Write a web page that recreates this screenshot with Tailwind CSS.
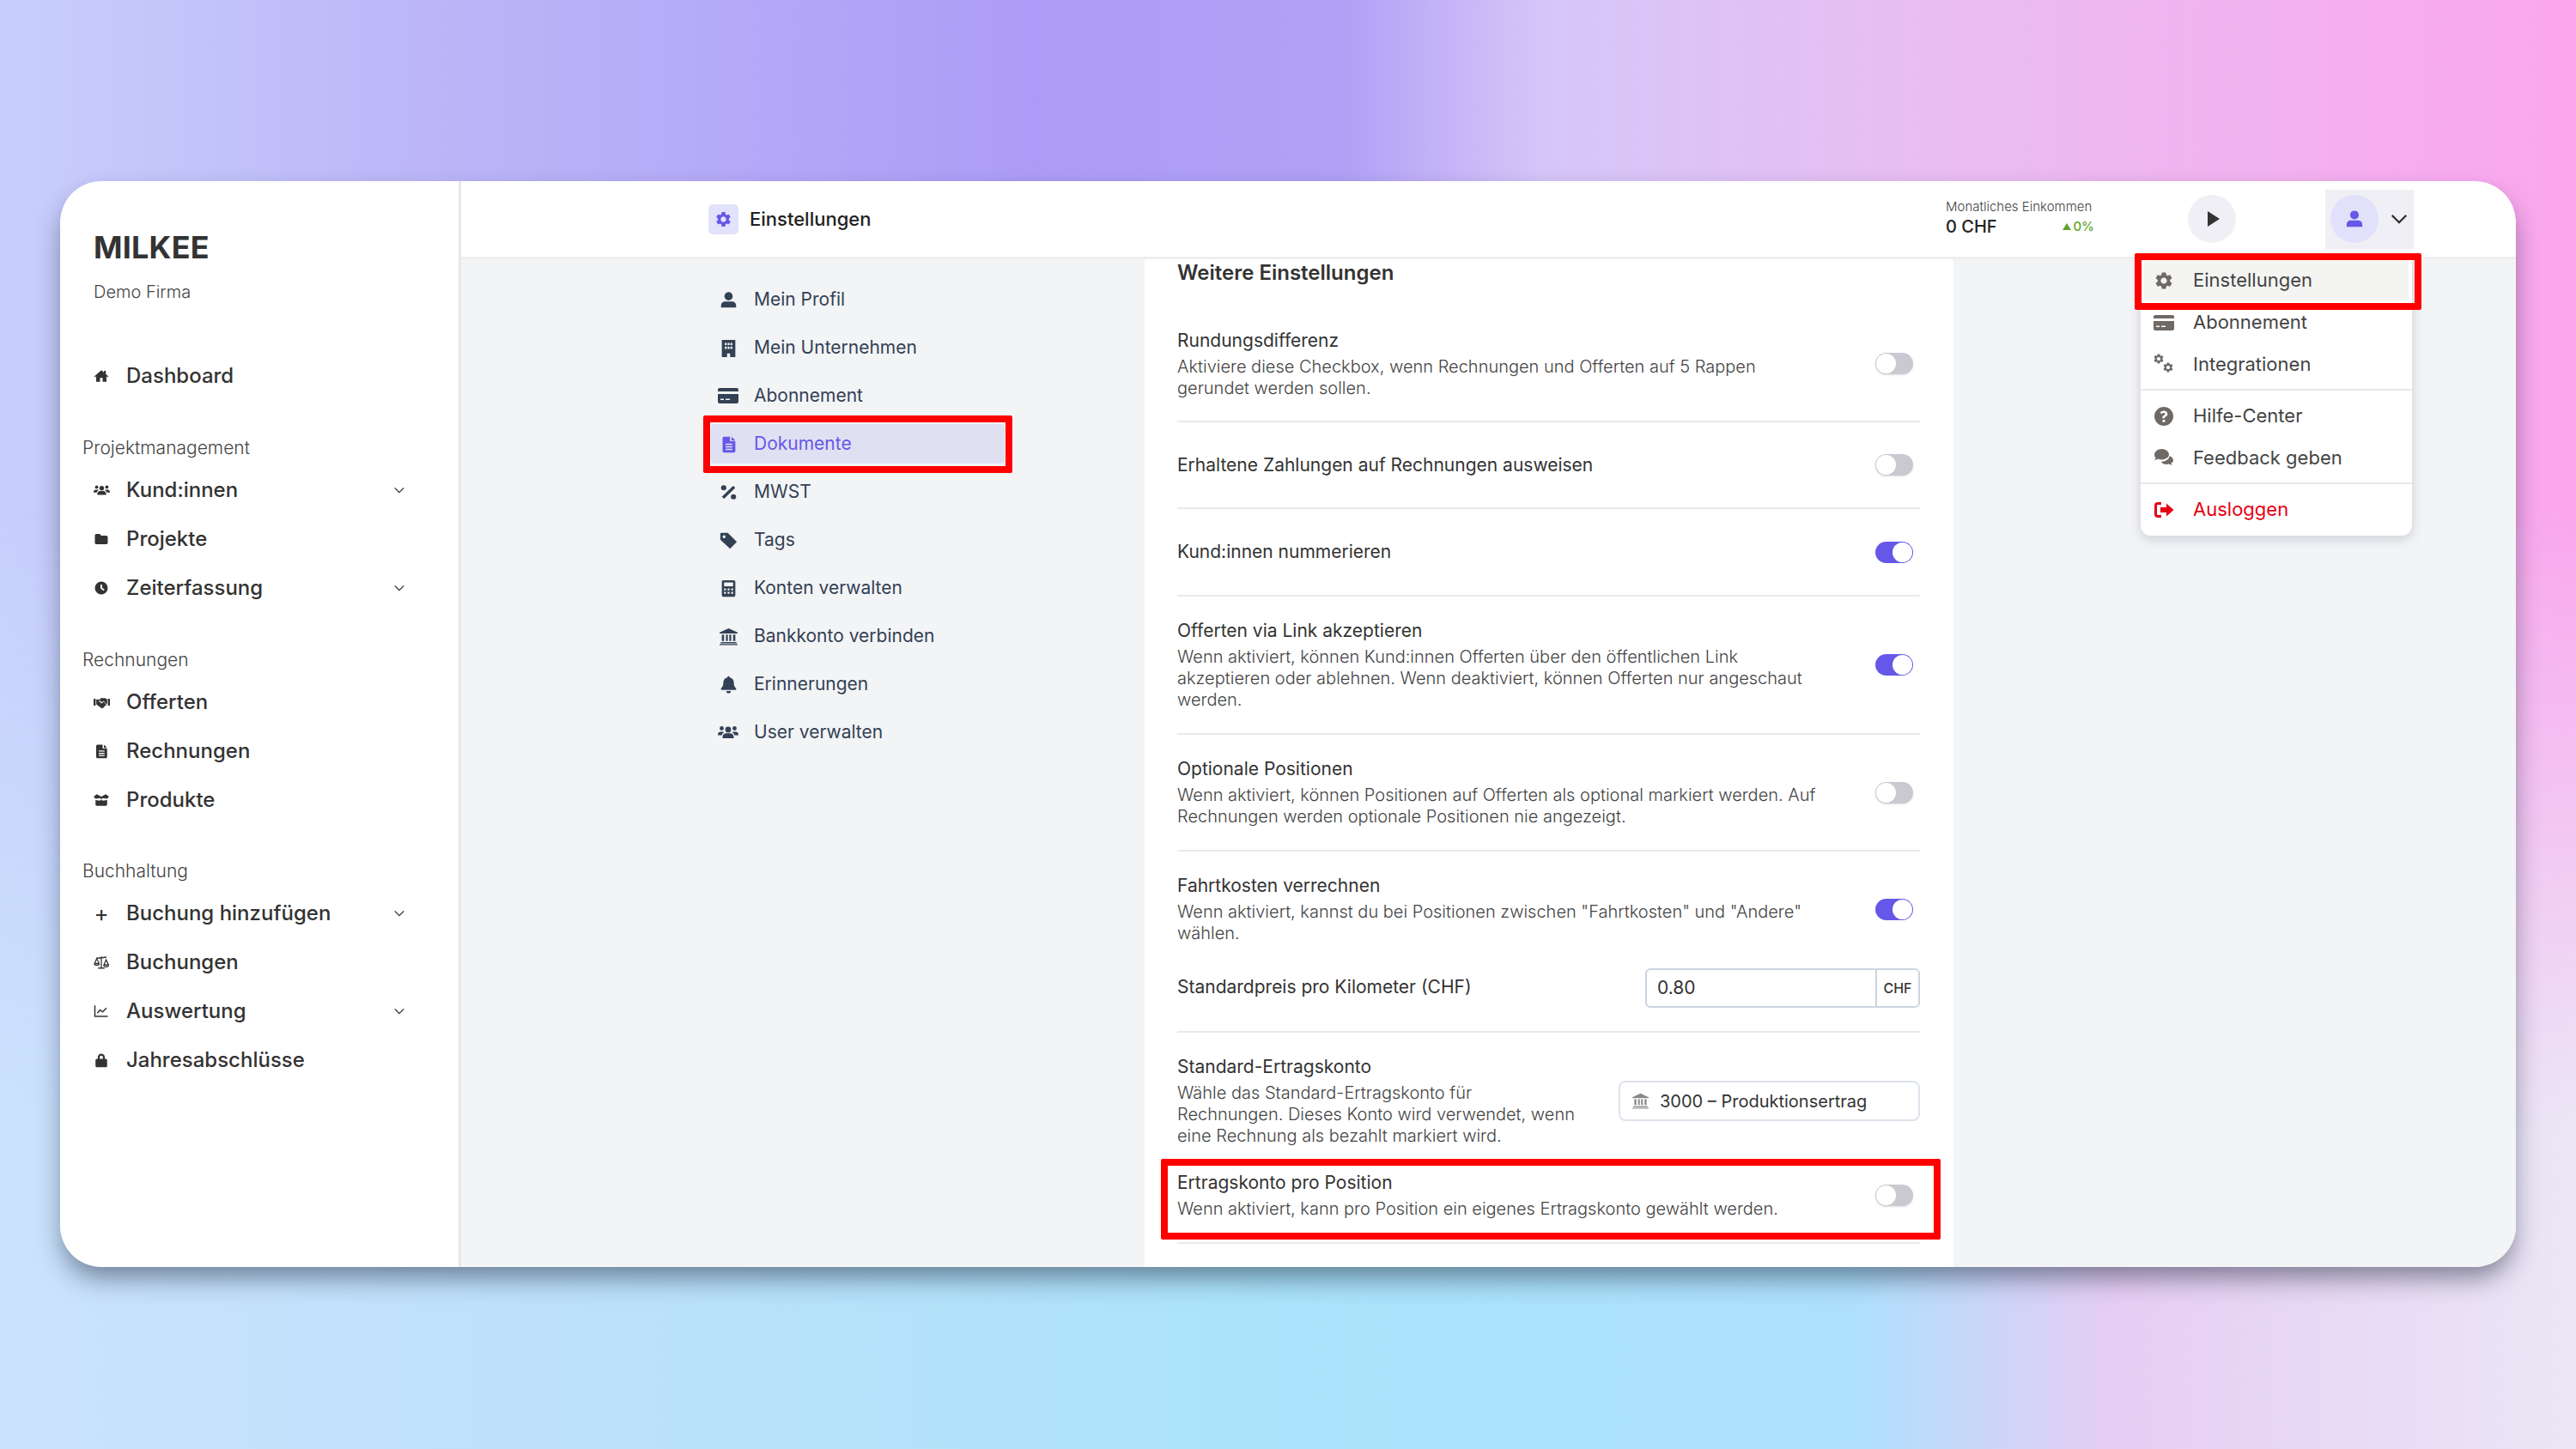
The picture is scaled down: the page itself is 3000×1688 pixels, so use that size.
<!DOCTYPE html>
<html lang="de">
<head>
<meta charset="UTF-8">
<title>Milkee Einstellungen</title>
<script src="https://cdn.jsdelivr.net/npm/@tailwindcss/browser@4"></script>
</head>
<body class="w-[3000px] h-[1688px] overflow-hidden font-['Inter',sans-serif] bg-[linear-gradient(90deg,#c8cffc_0%,#bdb8f8_15%,#ad9cf7_40%,#b0a0f6_52%,#d6c6f8_60%,#e9bdf3_75%,#f4b0f0_90%,#fba6ee_100%)] pl-[70px] pt-[211px]">

<!-- bottom half of the wallpaper -->
<div class="absolute inset-0 bg-[linear-gradient(90deg,#cbe2fd_0%,#bbe1fb_25%,#aae3fb_50%,#aee0fd_72%,#e6cdf4_82%,#ebe7f6_100%)] [mask-image:linear-gradient(180deg,transparent_35%,black_78%)]"></div>

<svg class="hidden">
  <symbol id="i-home" viewBox="0 0 24 24"><path d="M12 3 1 12.5l1.2 1.4L4 12.4V21h6v-6h4v6h6v-8.6l1.8 1.5 1.2-1.4L19 9V4h-3v2.4z"/></symbol>
  <symbol id="i-users" viewBox="0 4 24 16"><circle cx="12" cy="9" r="3.4"/><circle cx="4.5" cy="7.5" r="2.4"/><circle cx="19.500" cy="7.500" r="2.400"/><path d="M5.500 19v-1.500c0-2.500 2-4.200 4-4.200h5c2 0 4 1.700 4 4.200V19zM0 15c0-2.500 1.500-3.500 3-3.500h3c.6 0 1 .2 1.400.5-1.400.8-2.500 2-2.800 3.500H0zM24 15c0-2.500-1.500-3.500-3-3.500h-3c-.6 0-1 .2-1.400.5 1.400.8 2.500 2 2.800 3.500H24z"/></symbol>
  <symbol id="i-folder" viewBox="0 0 24 24"><path d="M2 6.500C2 5 3 4 4.500 4h5L12 6.500h7.500C21 6.500 22 7.500 22 9v8.500c0 1.500-1 2.500-2.500 2.500h-15C3 20 2 19 2 17.500z"/></symbol>
  <symbol id="i-clock" viewBox="0 0 24 24"><path fill-rule="evenodd" d="M12 2a10 10 0 1 0 0 20 10 10 0 0 0 0-20zm-1.300 4.500h2.600v5l3.700 2.700-1.500 2.100-4.800-3.500z"/></symbol>
  <symbol id="i-handshake" viewBox="0 3 24 18"><path d="M0 7h3v10H0zM21 7h3v10h-3z"/><path d="M4 8h5l-1 3 4 3 3-3 4 5-3 2-1 2-3 1-8-6H4zM10 6h7l3 2v6l-1 1-4-5-3 2-3-2z"/></symbol>
  <symbol id="i-file" viewBox="0 0 24 24"><path fill-rule="evenodd" d="M4 4a2 2 0 0 1 2-2h8v6h7v13a2 2 0 0 1-2 2H6a2 2 0 0 1-2-2zm12-2 5 5h-5zM8 11v1.800h9V11zm0 3.500v1.800h9v-1.800zm0 3.500v1.800h9V18z"/></symbol>
  <symbol id="i-box" viewBox="0 0 24 24"><path d="M0 6.500 5 3l7 3.500L19 3l5 3.500-3 3.500-7.500-1-1.500 2-1.500-2L3 10zM3 12l7 1 2-2 2 2 7-1v7c0 1-1 2-2 2H5c-1 0-2-1-2-2z"/></symbol>
  <symbol id="i-scale" viewBox="0 0 24 24"><path fill="none" stroke="currentColor" stroke-width="1.700" d="M12 3v17M7 21h10M4 6l16-2M5 6 1.500 14h7zM19.500 8 16 16h7zM1.500 14.500a3.500 2 0 0 0 7 0M16 17a3.500 2 0 0 0 7 0"/></symbol>
  <symbol id="i-chart" viewBox="0 0 24 24"><path fill="none" stroke="currentColor" stroke-width="2" d="M2 3v17h20M6 15l4-5 4 3 6-6"/></symbol>
  <symbol id="i-lock" viewBox="0 0 24 24"><path fill-rule="evenodd" d="M6.500 10V7.500a5.500 5.500 0 0 1 11 0V10H19a2 2 0 0 1 2 2v9a2 2 0 0 1-2 2H5a2 2 0 0 1-2-2v-9a2 2 0 0 1 2-2zm3 0h5V7.500a2.500 2.500 0 0 0-5 0z"/></symbol>
  <symbol id="i-user" viewBox="0 0 24 24"><circle cx="12" cy="7" r="5.500"/><path d="M2 22v-2.500C2 16 4.500 14 7.500 14h9c3 0 5.500 2 5.500 5.500V22z"/></symbol>
  <symbol id="i-building" viewBox="0 0 24 24"><path fill-rule="evenodd" d="M3 1h18v23h-7v-5h-4v5H3zM7 5v3h2.500V5zm3.800 0v3h2.500V5zm3.700 0v3H17V5zM7 10v3h2.500v-3zm3.800 0v3h2.500v-3zm3.700 0v3H17v-3z"/></symbol>
  <symbol id="i-card" viewBox="0 0 24 24"><path fill-rule="evenodd" d="M2 3h20a2 2 0 0 1 2 2v2H0V5a2 2 0 0 1 2-2zM0 10h24v9a2 2 0 0 1-2 2H2a2 2 0 0 1-2-2zm3 5.500v1.500h4v-1.500zm6 0v1.500h5v-1.500z"/></symbol>
  <symbol id="i-percent" viewBox="0 0 24 24"><circle cx="5.500" cy="6" r="3.500"/><circle cx="18.500" cy="18" r="3.500"/><path d="M18 3.500 21 6 6 20.500 3 18z"/></symbol>
  <symbol id="i-tag" viewBox="0 0 24 24"><path fill-rule="evenodd" d="M1 3.500A1.500 1.500 0 0 1 2.500 2H11l12 12-9 9L1 11zM6 5a2 2 0 1 0 0 4 2 2 0 0 0 0-4z"/></symbol>
  <symbol id="i-calc" viewBox="0 0 24 24"><path fill-rule="evenodd" d="M5 1h14a2 2 0 0 1 2 2v18a2 2 0 0 1-2 2H5a2 2 0 0 1-2-2V3a2 2 0 0 1 2-2zm1 3v5h12V4zm0 8v2.500h2.500V12zm4.700 0v2.500h2.600V12zm4.800 0v2.500H18V12zM6 16.500V19h2.500v-2.500zm4.700 0V19h2.600v-2.500zm4.800 0V19H18v-2.500z"/></symbol>
  <symbol id="i-bank" viewBox="0 0 24 24"><path d="M12 1 0 6.500V8h24V6.500zM3 9.500V18h3V9.500zM8.500 9.500V18h2.500V9.500zM13 9.500V18h2.500V9.500zM18 9.500V18h3V9.500zM1.500 19.500h21V21h-21zM0 22h24v1.500H0z"/></symbol>
  <symbol id="i-bell" viewBox="0 0 24 24"><path d="M12 1a1.600 1.600 0 0 1 1.600 1.700C17 3.400 19 6 19 9.500c0 5 2 6.500 3 7.700.4.500.2 1.800-1 1.800H3c-1.200 0-1.400-1.300-1-1.800 1-1.200 3-2.700 3-7.700 0-3.500 2-6.100 5.400-6.800A1.600 1.600 0 0 1 12 1zM9 20.500h6a3 3 0 0 1-6 0z"/></symbol>
  <symbol id="i-cog" viewBox="0 0 24 24"><path d="M19.140 12.940c.04-.3.06-.61.06-.94 0-.32-.02-.64-.07-.94l2.030-1.580c.18-.14.23-.41.12-.61l-1.920-3.320c-.12-.22-.37-.29-.59-.22l-2.390.96c-.5-.38-1.030-.7-1.620-.94l-.36-2.540c-.04-.24-.24-.41-.48-.41h-3.840c-.24 0-.43.17-.47.41l-.36 2.540c-.59.24-1.130.57-1.620.94l-2.390-.96c-.22-.08-.47 0-.59.22L2.740 8.870c-.12.21-.08.47.12.61l2.030 1.580c-.05.3-.09.63-.09.94s.02.64.07.94l-2.030 1.580c-.18.14-.23.41-.12.61l1.920 3.320c.12.22.37.29.59.22l2.390-.96c.5.38 1.030.7 1.620.94l.36 2.540c.05.24.24.41.48.41h3.840c.24 0 .44-.17.47-.41l.36-2.540c.59-.24 1.130-.56 1.620-.94l2.390.96c.22.08.47 0 .59-.22l1.920-3.320c.12-.22.07-.47-.12-.61l-2.010-1.580zM12 15.600c-1.980 0-3.600-1.620-3.600-3.600s1.620-3.600 3.600-3.600 3.600 1.620 3.600 3.600-1.620 3.600-3.600 3.600z"/></symbol>
  <symbol id="i-cogs" viewBox="0 0 48 48"><use href="#i-cog" x="-2" y="-2" width="28" height="28"/><use href="#i-cog" x="20" y="18" width="28" height="28"/></symbol>
  <symbol id="i-help" viewBox="0 0 24 24"><path fill-rule="evenodd" d="M12 1a11 11 0 1 0 0 22 11 11 0 0 0 0-22zm-.2 4.500c2.700 0 4.500 1.500 4.500 3.700 0 2-1.200 2.700-2.300 3.400-.7.400-.9.700-.9 1.300v.4h-2.800v-.7c0-1.500.8-2.200 1.800-2.800.9-.5 1.300-.9 1.300-1.500 0-.8-.7-1.300-1.600-1.300-1 0-1.600.5-2.100 1.300L7.500 8c.9-1.600 2.300-2.500 4.300-2.500zM10.500 16h2.900v2.700h-2.900z"/></symbol>
  <symbol id="i-comments" viewBox="0 0 24 24"><path d="M9.500 2C4.800 2 1 5 1 8.800c0 1.500.6 2.900 1.600 4-.5 1.100-1.400 2-1.400 2s2.300 0 4-1.300c1.200.6 2.700 1 4.300 1 4.700 0 8.500-3 8.500-5.700C18 5 14.200 2 9.500 2z"/><path d="M23 15.500c0-2.500-1.800-4.600-4.300-5.500-.6 3.800-4.500 6.700-9.200 6.700h-.8c1.100 2 3.600 3.300 6.300 3.300 1 0 2-.2 2.900-.5 1.400 1 3.600 1.300 3.600 1.300s-.7-1-1.200-2.200c1.700-.8 2.700-1.900 2.700-3.100z"/></symbol>
  <symbol id="i-logout" viewBox="0 0 24 24"><path d="M9 3H5a4 4 0 0 0-4 4v10a4 4 0 0 0 4 4h4v-3H5a1 1 0 0 1-1-1V7a1 1 0 0 1 1-1h4z"/><path d="M15 4.500 23.500 12 15 19.500V15H8V9h7z"/></symbol>
  <symbol id="i-chev" viewBox="0 0 24 24"><path fill="none" stroke="currentColor" stroke-width="2.400" d="M3 7.500 12 16.500 21 7.500"/></symbol>
</svg>

<div class="relative flex w-[2860px] h-[1265px] rounded-[48px] bg-white overflow-hidden shadow-[0_16px_30px_-4px_rgba(20,30,50,0.5)] text-[#333333]">

  <!-- Sidebar -->
  <aside class="w-[467px] shrink-0 border-r-[3px] border-[#e8e8ea] pl-[26px] pr-[62px] pt-[58px]">
    <div class="pl-[13px]">
      <div class="text-[36px] leading-[38px] font-bold tracking-[0.2px] text-[#333333]">MILKEE</div>
      <div class="mt-[21px] text-[20px] leading-[24px] font-light text-[#444444]">Demo Firma</div>
    </div>

    <a class="mt-[57px] flex items-center h-[57px] pl-[13px] text-[24px] font-medium">
      <svg class="w-[18px] h-[18px] fill-current mr-[20px]"><use href="#i-home"/></svg>Dashboard
    </a>

    <div class="mt-[44px] mb-[8px] text-[21px] leading-[24px] font-light text-[#444444]">Projektmanagement</div>
    <a class="flex items-center h-[57px] pl-[13px] text-[24px] font-medium">
      <svg class="w-[19px] h-[18px] fill-current mr-[19px]"><use href="#i-users"/></svg>Kund:innen
      <svg class="ml-auto w-[14px] h-[14px] text-[#333333]"><use href="#i-chev"/></svg>
    </a>
    <a class="flex items-center h-[57px] pl-[13px] text-[24px] font-medium">
      <svg class="w-[18px] h-[18px] fill-current mr-[20px]"><use href="#i-folder"/></svg>Projekte
    </a>
    <a class="flex items-center h-[57px] pl-[13px] text-[24px] font-medium">
      <svg class="w-[18px] h-[18px] fill-current mr-[20px]"><use href="#i-clock"/></svg>Zeiterfassung
      <svg class="ml-auto w-[14px] h-[14px] text-[#333333]"><use href="#i-chev"/></svg>
    </a>

    <div class="mt-[44px] mb-[8px] text-[21px] leading-[24px] font-light text-[#444444]">Rechnungen</div>
    <a class="flex items-center h-[57px] pl-[13px] text-[24px] font-medium">
      <svg class="w-[19px] h-[18px] fill-current mr-[19px]"><use href="#i-handshake"/></svg>Offerten
    </a>
    <a class="flex items-center h-[57px] pl-[13px] text-[24px] font-medium">
      <svg class="w-[18px] h-[18px] fill-current mr-[20px]"><use href="#i-file"/></svg>Rechnungen
    </a>
    <a class="flex items-center h-[57px] pl-[13px] text-[24px] font-medium">
      <svg class="w-[18px] h-[18px] fill-current mr-[20px]"><use href="#i-box"/></svg>Produkte
    </a>

    <div class="mt-[43px] mb-[8px] text-[21px] leading-[24px] font-light text-[#444444]">Buchhaltung</div>
    <a class="flex items-center h-[57px] pl-[13px] text-[24px] font-medium">
      <span class="w-[18px] mr-[20px] text-center text-[26px] leading-none font-normal">+</span>Buchung hinzufügen
      <svg class="ml-auto w-[14px] h-[14px] text-[#333333]"><use href="#i-chev"/></svg>
    </a>
    <a class="flex items-center h-[57px] pl-[13px] text-[24px] font-medium">
      <svg class="w-[18px] h-[18px] mr-[20px]"><use href="#i-scale"/></svg>Buchungen
    </a>
    <a class="flex items-center h-[57px] pl-[13px] text-[24px] font-medium">
      <svg class="w-[18px] h-[18px] mr-[20px]"><use href="#i-chart"/></svg>Auswertung
      <svg class="ml-auto w-[14px] h-[14px] text-[#333333]"><use href="#i-chev"/></svg>
    </a>
    <a class="flex items-center h-[57px] pl-[13px] text-[24px] font-medium">
      <svg class="w-[18px] h-[18px] fill-current mr-[20px]"><use href="#i-lock"/></svg>Jahresabschlüsse
    </a>
  </aside>

  <main class="flex-1 flex flex-col min-w-0">
    <!-- Top bar -->
    <header class="h-[91px] shrink-0 flex items-center border-b-[3px] border-[#eeeeee] pl-[288px] pr-[119px]">
      <span class="w-[35px] h-[35px] rounded-[5px] bg-[#e3e2fb] text-[#6558e8] flex items-center justify-center mr-[13px]">
        <svg class="w-[21px] h-[21px] fill-current"><use href="#i-cog"/></svg>
      </span>
      <span class="text-[22px] font-medium text-[#222222]">Einstellungen</span>

      <div class="ml-auto w-[173px]">
        <div class="text-[15px] leading-[17px] font-light text-[#444444] whitespace-nowrap">Monatliches Einkommen</div>
        <div class="flex items-center justify-between mt-[1px]">
          <span class="text-[20px] leading-[28px] font-medium text-[#222222]">0 CHF</span>
          <span class="flex items-center gap-[2px] text-[15px] font-medium text-[#5fa32f]">
            <span class="w-0 h-0 border-x-[5px] border-x-transparent border-b-[8px] border-b-[#5fa32f]"></span>0%
          </span>
        </div>
      </div>

      <button class="ml-[109px] w-[56px] h-[56px] rounded-full bg-[#f0eff5] flex items-center justify-center">
        <span class="w-0 h-0 ml-[3px] border-y-[9px] border-y-transparent border-l-[14px] border-l-[#333333]"></span>
      </button>

      <button class="ml-[104px] w-[103px] h-[69px] bg-[#f0eff5] flex items-center pl-[6px]">
        <span class="w-[56px] h-[56px] rounded-full bg-[#e2e1fb] text-[#6558e8] flex items-center justify-center">
          <svg class="w-[22px] h-[24px] fill-current"><use href="#i-user"/></svg>
        </span>
        <svg class="ml-[13px] w-[22px] h-[22px] text-[#333333]"><use href="#i-chev"/></svg>
      </button>
    </header>

    <div class="flex-1 flex bg-[#f3f4f6] min-h-0">
      <!-- Settings nav -->
      <nav class="w-[796px] shrink-0 pl-[291px] pt-[19px] text-[21px] text-[#334155]">
        <a class="flex items-center h-[56px] pl-[10px]"><svg class="w-[21px] h-[21px] mr-[19px] fill-current"><use href="#i-user"/></svg>Mein Profil</a>
        <a class="flex items-center h-[56px] pl-[10px]"><svg class="w-[21px] h-[21px] mr-[19px] fill-current"><use href="#i-building"/></svg>Mein Unternehmen</a>
        <a class="flex items-center h-[56px] pl-[10px]"><svg class="w-[24px] h-[24px] mr-[18px] -ml-[2px] fill-current"><use href="#i-card"/></svg>Abonnement</a>
        <a class="flex items-center h-[46px] my-[5px] pl-[10px] w-[342px] rounded-[4px] bg-[#e0e0f3] text-[#6558e8]"><svg class="w-[21px] h-[21px] mr-[19px] fill-current"><use href="#i-file"/></svg>Dokumente</a>
        <a class="flex items-center h-[56px] pl-[10px]"><svg class="w-[21px] h-[21px] mr-[19px] fill-current"><use href="#i-percent"/></svg>MWST</a>
        <a class="flex items-center h-[56px] pl-[10px]"><svg class="w-[21px] h-[21px] mr-[19px] fill-current"><use href="#i-tag"/></svg>Tags</a>
        <a class="flex items-center h-[56px] pl-[10px]"><svg class="w-[21px] h-[21px] mr-[19px] fill-current"><use href="#i-calc"/></svg>Konten verwalten</a>
        <a class="flex items-center h-[56px] pl-[10px]"><svg class="w-[21px] h-[21px] mr-[19px] fill-current"><use href="#i-bank"/></svg>Bankkonto verbinden</a>
        <a class="flex items-center h-[56px] pl-[10px]"><svg class="w-[21px] h-[21px] mr-[19px] fill-current"><use href="#i-bell"/></svg>Erinnerungen</a>
        <a class="flex items-center h-[56px] pl-[10px]"><svg class="w-[24px] h-[24px] mr-[18px] -ml-[2px] fill-current"><use href="#i-users"/></svg>User verwalten</a>
      </nav>

      <!-- Settings content -->
      <section class="w-[942px] shrink-0 bg-white pl-[38px] pr-[39px] overflow-hidden">
        <h2 class="h-[55px] pt-[1px] text-[24px] leading-[30px] font-semibold text-[#333333]">Weitere Einstellungen</h2>

        <div class="flex items-center justify-between h-[135px] border-b-[2px] border-[#e8e9ec]">
          <div>
            <div class="text-[21px] leading-[28px] text-[#333333]">Rundungsdifferenz</div>
            <p class="mt-[4px] text-[20px] leading-[25px] font-light text-[#444444]">Aktiviere diese Checkbox, wenn Rechnungen und Offerten auf 5 Rappen<br>gerundet werden sollen.</p>
          </div>
          <span class="mr-[8px] flex w-[44px] h-[25px] rounded-full bg-[#c9c9d1] p-[1px] shadow-sm"><span class="w-[23px] h-[23px] rounded-full bg-white"></span></span>
        </div>

        <div class="flex items-center justify-between h-[101px] border-b-[2px] border-[#e8e9ec]">
          <div class="text-[21px] leading-[28px] text-[#333333]">Erhaltene Zahlungen auf Rechnungen ausweisen</div>
          <span class="mr-[8px] flex w-[44px] h-[25px] rounded-full bg-[#c9c9d1] p-[1px] shadow-sm"><span class="w-[23px] h-[23px] rounded-full bg-white"></span></span>
        </div>

        <div class="flex items-center justify-between h-[102px] border-b-[2px] border-[#e8e9ec]">
          <div class="text-[21px] leading-[28px] text-[#333333]">Kund:innen nummerieren</div>
          <span class="mr-[8px] flex justify-end w-[44px] h-[25px] rounded-full bg-[#6558e8] p-[1px]"><span class="w-[23px] h-[23px] rounded-full bg-white"></span></span>
        </div>

        <div class="flex items-center justify-between h-[161px] border-b-[2px] border-[#e8e9ec]">
          <div>
            <div class="text-[21px] leading-[28px] text-[#333333]">Offerten via Link akzeptieren</div>
            <p class="mt-[4px] text-[20px] leading-[25px] font-light text-[#444444]">Wenn aktiviert, können Kund:innen Offerten über den öffentlichen Link<br>akzeptieren oder ablehnen. Wenn deaktiviert, können Offerten nur angeschaut<br>werden.</p>
          </div>
          <span class="mr-[8px] flex justify-end w-[44px] h-[25px] rounded-full bg-[#6558e8] p-[1px]"><span class="w-[23px] h-[23px] rounded-full bg-white"></span></span>
        </div>

        <div class="flex items-center justify-between h-[136px] border-b-[2px] border-[#e8e9ec]">
          <div>
            <div class="text-[21px] leading-[28px] text-[#333333]">Optionale Positionen</div>
            <p class="mt-[4px] text-[20px] leading-[25px] font-light text-[#444444]">Wenn aktiviert, können Positionen auf Offerten als optional markiert werden. Auf<br>Rechnungen werden optionale Positionen nie angezeigt.</p>
          </div>
          <span class="mr-[8px] flex w-[44px] h-[25px] rounded-full bg-[#c9c9d1] p-[1px] shadow-sm"><span class="w-[23px] h-[23px] rounded-full bg-white"></span></span>
        </div>

        <div class="h-[211px] border-b-[2px] border-[#e8e9ec] pt-[26px]">
          <div class="flex items-center justify-between">
            <div>
              <div class="text-[21px] leading-[28px] text-[#333333]">Fahrtkosten verrechnen</div>
              <p class="mt-[4px] text-[20px] leading-[25px] font-light text-[#444444]">Wenn aktiviert, kannst du bei Positionen zwischen "Fahrtkosten" und "Andere"<br>wählen.</p>
            </div>
            <span class="mr-[8px] flex justify-end w-[44px] h-[25px] rounded-full bg-[#6558e8] p-[1px]"><span class="w-[23px] h-[23px] rounded-full bg-white"></span></span>
          </div>
          <div class="flex items-center justify-between mt-[28px]">
            <div class="pb-[3px] text-[21px] leading-[28px] text-[#333333]">Standardpreis pro Kilometer (CHF)</div>
            <div class="flex w-[320px] h-[46px] rounded-[6px] border-[2px] border-[#cbd5e1] text-[21px] text-[#333333]">
              <div class="flex-1 flex items-center pl-[12px]">0.80</div>
              <div class="w-[50px] flex items-center justify-center border-l-[2px] border-[#cbd5e1] text-[16px] font-medium">CHF</div>
            </div>
          </div>
        </div>

        <div class="flex justify-between h-[135px] pt-[26px]">
          <div>
            <div class="text-[21px] leading-[28px] text-[#333333]">Standard-Ertragskonto</div>
            <p class="mt-[4px] text-[20px] leading-[25px] font-light text-[#444444]">Wähle das Standard-Ertragskonto für<br>Rechnungen. Dieses Konto wird verwendet, wenn<br>eine Rechnung als bezahlt markiert wird.</p>
          </div>
          <div class="flex items-center shrink-0 mt-[30px] w-[351px] h-[47px] rounded-[8px] border-[2px] border-[#dde3ec] pl-[14px] text-[20px] text-[#333333]">
            <svg class="w-[19px] h-[19px] mr-[13px] text-[#888888] fill-current"><use href="#i-bank"/></svg>3000 – Produktionsertrag
          </div>
        </div>

        <div class="flex items-center justify-between h-[111px] border-b-[2px] border-[#e8e9ec]">
          <div>
            <div class="text-[21px] leading-[28px] text-[#333333]">Ertragskonto pro Position</div>
            <p class="mt-[4px] text-[20px] leading-[25px] font-light text-[#444444]">Wenn aktiviert, kann pro Position ein eigenes Ertragskonto gewählt werden.</p>
          </div>
          <span class="mr-[8px] flex w-[44px] h-[25px] rounded-full bg-[#c9c9d1] p-[1px] shadow-sm"><span class="w-[23px] h-[23px] rounded-full bg-white"></span></span>
        </div>
      </section>
    </div>
  </main>

  <!-- Account dropdown -->
  <div class="absolute left-[2423px] top-[85px] w-[316px] h-[328px] rounded-b-[12px] bg-white shadow-[0_4px_14px_rgba(30,40,70,0.18)] px-[4px] pt-[7px] text-[22px] text-[#444444]">
    <a class="flex items-center h-[47px] pl-[11px] rounded-[3px] bg-[#f4f4f2]"><svg class="w-[24px] h-[24px] mr-[22px] text-[#6f6a66] fill-current"><use href="#i-cog"/></svg>Einstellungen</a>
    <a class="flex items-center h-[49px] mt-[1px] pl-[11px]"><svg class="w-[24px] h-[24px] mr-[22px] text-[#6f6a66] fill-current"><use href="#i-card"/></svg>Abonnement</a>
    <a class="flex items-center h-[48px] pl-[11px]"><svg class="w-[24px] h-[24px] mr-[22px] text-[#6f6a66] fill-current"><use href="#i-cogs"/></svg>Integrationen</a>
    <div class="-mx-[4px] mt-[5px] border-t-[2px] border-[#e8e8ec]"></div>
    <a class="flex items-center h-[49px] mt-[5px] pl-[11px]"><svg class="w-[24px] h-[24px] mr-[22px] text-[#6f6a66] fill-current"><use href="#i-help"/></svg>Hilfe-Center</a>
    <a class="flex items-center h-[48px] pl-[11px]"><svg class="w-[24px] h-[24px] mr-[22px] text-[#6f6a66] fill-current"><use href="#i-comments"/></svg>Feedback geben</a>
    <div class="-mx-[4px] mt-[5px] border-t-[2px] border-[#e8e8ec]"></div>
    <a class="flex items-center h-[49px] mt-[5px] pl-[11px] text-[#e60012]"><svg class="w-[24px] h-[24px] mr-[22px] fill-current"><use href="#i-logout"/></svg>Ausloggen</a>
  </div>

  <!-- Red annotation boxes -->
  <div class="absolute left-[749px] top-[273px] w-[360px] h-[67px] border-[8px] border-[#ff0000] rounded-[2px]"></div>
  <div class="absolute left-[2416px] top-[84px] w-[334px] h-[66px] border-[8px] border-[#ff0000] rounded-[2px]"></div>
  <div class="absolute left-[1282px] top-[1139px] w-[908px] h-[94px] border-[8px] border-[#ff0000] rounded-[2px]"></div>
</div>
</body>
</html>
